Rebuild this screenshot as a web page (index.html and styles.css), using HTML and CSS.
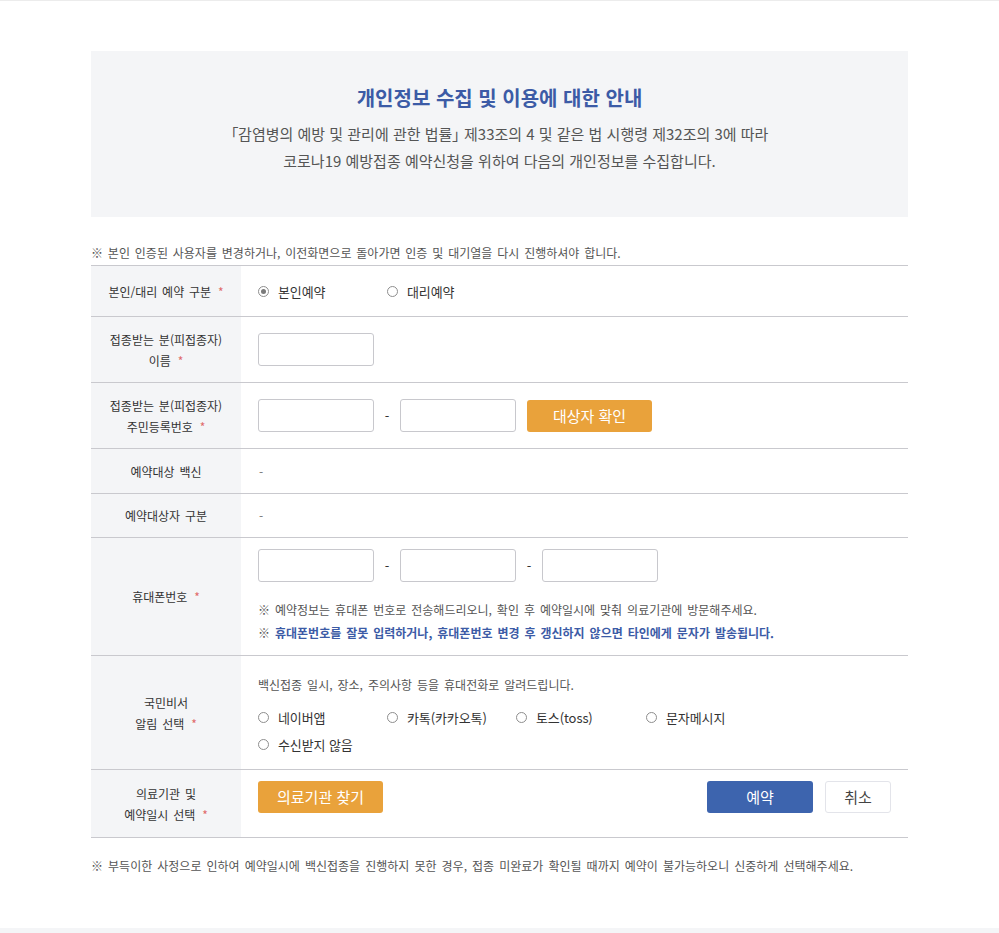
FILE: index.html
```html
<!DOCTYPE html>
<html lang="ko">
<head>
<meta charset="utf-8">
<title>개인정보 수집 및 이용에 대한 안내</title>
<link rel="stylesheet" href="styles.css">
</head>
<body>
<div class="topline"></div>
<main class="page">
  <section class="intro">
    <h1 class="intro-title">개인정보 수집 및 이용에 대한 안내</h1>
    <p class="intro-text"><span class="bracket">「</span>감염병의 예방 및 관리에 관한 법률<span class="bracket">」</span> 제33조의 4 및 같은 법 시행령 제32조의 3에 따라</p>
    <p class="intro-text">코로나19 예방접종 예약신청을 위하여 다음의 개인정보를 수집합니다.</p>
  </section>

  <p class="notice notice-top">※ 본인 인증된 사용자를 변경하거나, 이전화면으로 돌아가면 인증 및 대기열을 다시 진행하셔야 합니다.</p>

  <div class="form">
    <div class="row row-1">
      <div class="label"><span class="label-text">본인/대리 예약 구분 <span class="req">*</span></span></div>
      <div class="cell">
        <div class="radios">
          <label class="radio"><span class="dot checked"></span>본인예약</label>
          <label class="radio"><span class="dot"></span>대리예약</label>
        </div>
      </div>
    </div>

    <div class="row row-input">
      <div class="label"><span class="label-text">접종받는 분(피접종자)<br>이름 <span class="req">*</span></span></div>
      <div class="cell">
        <div class="field-line"><span class="input"></span></div>
      </div>
    </div>

    <div class="row row-input">
      <div class="label"><span class="label-text">접종받는 분(피접종자)<br>주민등록번호 <span class="req">*</span></span></div>
      <div class="cell">
        <div class="field-line">
          <span class="input"></span><span class="dash">-</span><span class="input"></span>
          <button class="btn btn-orange btn-check">대상자 확인</button>
        </div>
      </div>
    </div>

    <div class="row row-text">
      <div class="label"><span class="label-text">예약대상 백신</span></div>
      <div class="cell"><span class="empty">-</span></div>
    </div>

    <div class="row row-text2">
      <div class="label"><span class="label-text">예약대상자 구분</span></div>
      <div class="cell"><span class="empty">-</span></div>
    </div>

    <div class="row row-phone">
      <div class="label"><span class="label-text">휴대폰번호 <span class="req">*</span></span></div>
      <div class="cell cell-phone">
        <div class="field-line">
          <span class="input"></span><span class="dash">-</span><span class="input"></span><span class="dash">-</span><span class="input"></span>
        </div>
        <p class="phone-note">※ 예약정보는 휴대폰 번호로 전송해드리오니, 확인 후 예약일시에 맞춰 의료기관에 방문해주세요.</p>
        <p class="phone-note phone-warn">※ <strong>휴대폰번호를 잘못 입력하거나, 휴대폰번호 변경 후 갱신하지 않으면 타인에게 문자가 발송됩니다.</strong></p>
      </div>
    </div>

    <div class="row row-alarm">
      <div class="label"><span class="label-text">국민비서<br>알림 선택 <span class="req">*</span></span></div>
      <div class="cell cell-alarm">
        <p class="alarm-text">백신접종 일시, 장소, 주의사항 등을 휴대전화로 알려드립니다.</p>
        <div class="alarm-grid">
          <label class="radio"><span class="dot"></span>네이버앱</label>
          <label class="radio"><span class="dot"></span>카톡(카카오톡)</label>
          <label class="radio"><span class="dot"></span>토스(toss)</label>
          <label class="radio"><span class="dot"></span>문자메시지</label>
          <label class="radio"><span class="dot"></span>수신받지 않음</label>
        </div>
      </div>
    </div>

    <div class="row row-last">
      <div class="label"><span class="label-text">의료기관 및<br>예약일시 선택 <span class="req">*</span></span></div>
      <div class="cell cell-actions">
        <button class="btn btn-orange btn-find">의료기관 찾기</button>
        <div class="actions">
          <button class="btn btn-blue">예약</button>
          <button class="btn btn-white">취소</button>
        </div>
      </div>
    </div>
  </div>

  <p class="notice notice-bottom">※ 부득이한 사정으로 인하여 예약일시에 백신접종을 진행하지 못한 경우, 접종 미완료가 확인될 때까지 예약이 불가능하오니 신중하게 선택해주세요.</p>
</main>
<footer class="footer"></footer>
</body>
</html>
```

FILE: styles.css
```css
* { box-sizing: border-box; }

html, body {
  margin: 0;
  padding: 0;
  background: #ffffff;
}

body {
  font-family: "Noto Sans CJK KR", "Noto Sans", sans-serif;
  color: #555;
}

p { margin: 0; }

.topline {
  height: 1px;
  background: #ececec;
}

.page {
  width: 817px;
  margin: 0 auto;
  padding: 50px 0 54px;
}

/* Intro box */
.intro {
  background: #f4f5f7;
  height: 166px;
  padding-top: 34px;
  text-align: center;
}

.intro-title {
  margin: 0 0 9px;
  font-size: 20px;
  line-height: 26px;
  font-weight: 700;
  color: #3c5ba6;
}

.intro-text {
  font-size: 15px;
  line-height: 27px;
  color: #555;
}

.bracket {
  font-feature-settings: "palt" 1;
}

/* Notices */
.notice {
  font-size: 12px;
  line-height: 16px;
  word-spacing: 1.5px;
  color: #555;
}

.notice-top {
  margin-top: 28px;
  margin-bottom: 4px;
}

.notice-bottom {
  margin-top: 20px;
  word-spacing: 1.7px;
}

/* Form table */
.form {
  border-top: 1px solid #c9c9ce;
}

.row {
  display: flex;
  border-bottom: 1px solid #c9c9ce;
}

.label {
  flex: 0 0 150px;
  background: #f4f5f7;
  display: flex;
  align-items: center;
  justify-content: center;
}

.label-text {
  display: block;
  text-align: center;
  font-size: 12px;
  line-height: 21px;
  color: #333;
  word-spacing: 1.5px;
}

.req {
  color: #e06a6a;
  margin-left: 2px;
}

.cell {
  flex: 1;
  padding-left: 17px;
  display: flex;
  align-items: center;
  font-size: 13px;
  color: #333;
}

.row-1 { height: 51px; }
.row-input { height: 66px; }
.row-text { height: 45px; }
.row-text2 { height: 44px; }

.empty {
  color: #777;
  font-size: 12px;
  padding-left: 1px;
}

/* Radios */
.radios {
  display: flex;
}

.radios .radio { width: 129px; }

.radio {
  display: flex;
  align-items: center;
  font-size: 13px;
  color: #333;
  letter-spacing: -0.1px;
  white-space: nowrap;
}

.dot {
  width: 11px;
  height: 11px;
  border: 1px solid #8e8e8e;
  border-radius: 50%;
  margin-right: 9px;
  display: inline-flex;
  align-items: center;
  justify-content: center;
  background: #fff;
  flex: 0 0 11px;
}

.dot.checked::after {
  content: "";
  width: 5px;
  height: 5px;
  border-radius: 50%;
  background: #7a7a7a;
}

/* Inputs */
.field-line {
  display: flex;
  align-items: center;
}

.input {
  display: block;
  width: 116px;
  height: 33px;
  border: 1px solid #c8c8cd;
  border-radius: 3px;
  background: #fff;
}

.dash {
  width: 26px;
  text-align: center;
  font-size: 13px;
  color: #333;
}

/* Buttons */
.btn {
  font-family: inherit;
  border: 0;
  border-radius: 3px;
  height: 32px;
  font-size: 15px;
  line-height: 32px;
  padding: 0;
  cursor: pointer;
}

.btn-orange {
  background: #e9a23b;
  color: #fff;
}

.btn-check {
  width: 125px;
  margin-left: 11px;
}

.btn-find {
  width: 125px;
}

.btn-blue {
  background: #3d64ae;
  color: #fff;
  width: 106px;
}

.btn-white {
  background: #fff;
  color: #444;
  border: 1px solid #e3e4ea;
  width: 66px;
  line-height: 30px;
}

/* Phone row */
.cell-phone {
  flex-direction: column;
  align-items: flex-start;
  justify-content: flex-start;
  padding-top: 11px;
  padding-bottom: 11px;
}

.cell-phone .field-line { margin-bottom: 16px; }

.phone-note {
  font-size: 12px;
  line-height: 23px;
  color: #555;
  word-spacing: 1.6px;
}

.phone-warn strong {
  color: #3c5ba6;
  font-weight: 700;
}

/* Alarm row */
.cell-alarm {
  flex-direction: column;
  align-items: flex-start;
  padding-top: 19px;
  padding-bottom: 11px;
}

.alarm-text {
  font-size: 12px;
  line-height: 20px;
  color: #555;
  word-spacing: 1.6px;
  margin-bottom: 9px;
}

.alarm-grid {
  display: grid;
  grid-template-columns: 129px 129px 130px 140px;
  grid-auto-rows: 27px;
  align-items: center;
}

/* Last row */
.cell-actions {
  align-items: flex-start;
  justify-content: space-between;
  padding-top: 11px;
  padding-right: 17px;
  height: 67px;
}

.actions {
  display: flex;
  gap: 12px;
}

/* Footer */
.footer {
  height: 6px;
  background: #f4f5f7;
}
```
